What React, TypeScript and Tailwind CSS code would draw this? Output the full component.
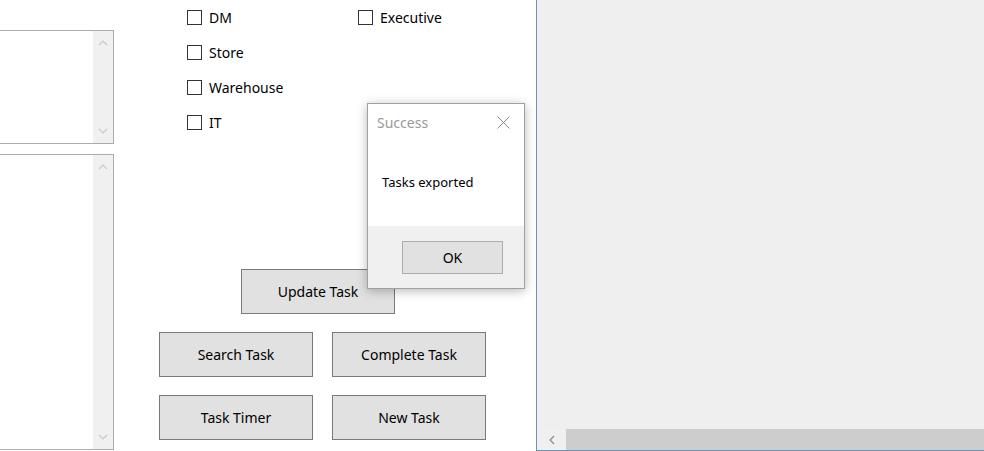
const font = { fontFamily: '"Segoe UI", "Noto Sans", "Open Sans", sans-serif' }

function Chevron({ dir }: { dir: 'up' | 'down' | 'left' }) {
  const d = dir === 'up' ? 'M1 6 L5 2 L9 6' : dir === 'down' ? 'M1 2 L5 6 L9 2' : 'M6 1 L2 5 L6 9'
  const w = dir === 'left' ? 8 : 10
  const h = dir === 'left' ? 10 : 8
  return (
    <svg width={w} height={h} viewBox={`0 0 ${w} ${h}`} fill="none">
      <path d={d} stroke={dir === 'left' ? '#8a8a8a' : '#c9c9c9'} strokeWidth="1.2" />
    </svg>
  )
}

function ListBox({ className }: { className: string }) {
  return (
    <div className={`flex border border-l-0 border-[#ababab] bg-white ${className}`}>
      <div className="flex-1" />
      <div className="flex w-[20px] flex-col items-center justify-between bg-[#f0f0f0] py-[8px]">
        <Chevron dir="up" />
        <Chevron dir="down" />
      </div>
    </div>
  )
}

function Check({ label }: { label: string }) {
  return (
    <div className="flex h-[35px] items-center">
      <div className="h-[15px] w-[15px] border border-[#333] bg-white" />
      <span className="ml-[7px] text-[14px] text-black">{label}</span>
    </div>
  )
}

function Btn({ label, className }: { label: string; className?: string }) {
  return (
    <button className={`flex h-[45px] w-[154px] items-center justify-center border border-[#7a7a7a] bg-[#e1e1e1] text-[14px] text-black ${className ?? ''}`}>
      {label}
    </button>
  )
}

export default function App() {
  return (
    <div className="relative flex h-[451px] w-[984px] overflow-hidden bg-white" style={font}>
      <div className="flex w-[114px] flex-col pt-[30px]">
        <ListBox className="h-[114px]" />
        <ListBox className="mt-[10px] h-[296px]" />
      </div>

      <div className="flex w-[422px] flex-col">
        <div className="grid grid-cols-[171px_1fr] pl-[73px]">
          <div>
            <Check label="DM" />
            <Check label="Store" />
            <Check label="Warehouse" />
            <Check label="IT" />
          </div>
          <div>
            <Check label="Executive" />
          </div>
        </div>
        <Btn label="Update Task" className="ml-[127px] mt-[129px]" />
        <div className="ml-[45px] mt-[18px] flex gap-[19px]">
          <Btn label="Search Task" />
          <Btn label="Complete Task" />
        </div>
        <div className="ml-[45px] mt-[18px] flex gap-[19px]">
          <Btn label="Task Timer" />
          <Btn label="New Task" />
        </div>
      </div>

      <div className="flex flex-1 flex-col border-b border-l border-[#6f8fbd] bg-[#efefef]">
        <div className="flex-1" />
        <div className="flex h-[21px]">
          <div className="flex w-[29px] items-center justify-center bg-[#f0f0f0]">
            <Chevron dir="left" />
          </div>
          <div className="flex-1 bg-[#cdcdcd]" />
        </div>
      </div>

      <div className="absolute left-[367px] top-[103px] flex h-[186px] w-[158px] flex-col border border-[#a0a0a0] bg-white shadow-[0_2px_10px_rgba(0,0,0,0.28)]">
        <div className="flex h-[36px] items-center justify-between pl-[9px] pr-[14px]">
          <span className="text-[14px] text-[#9a9a9a]">Success</span>
          <svg width="13" height="13" viewBox="0 0 13 13" fill="none">
            <path d="M0.5 0.5 L12.5 12.5 M12.5 0.5 L0.5 12.5" stroke="#8a8a8a" strokeWidth="1" />
          </svg>
        </div>
        <div className="flex h-[86px] items-center pl-[14px]">
          <span className="text-[13px] text-black">Tasks exported</span>
        </div>
        <div className="flex flex-1 items-start bg-[#f0f0f0] pl-[34px] pt-[15px]">
          <button className="flex h-[33px] w-[101px] items-center justify-center border border-[#adadad] bg-[#e1e1e1] text-[14px] text-black">
            OK
          </button>
        </div>
      </div>
    </div>
  )
}
